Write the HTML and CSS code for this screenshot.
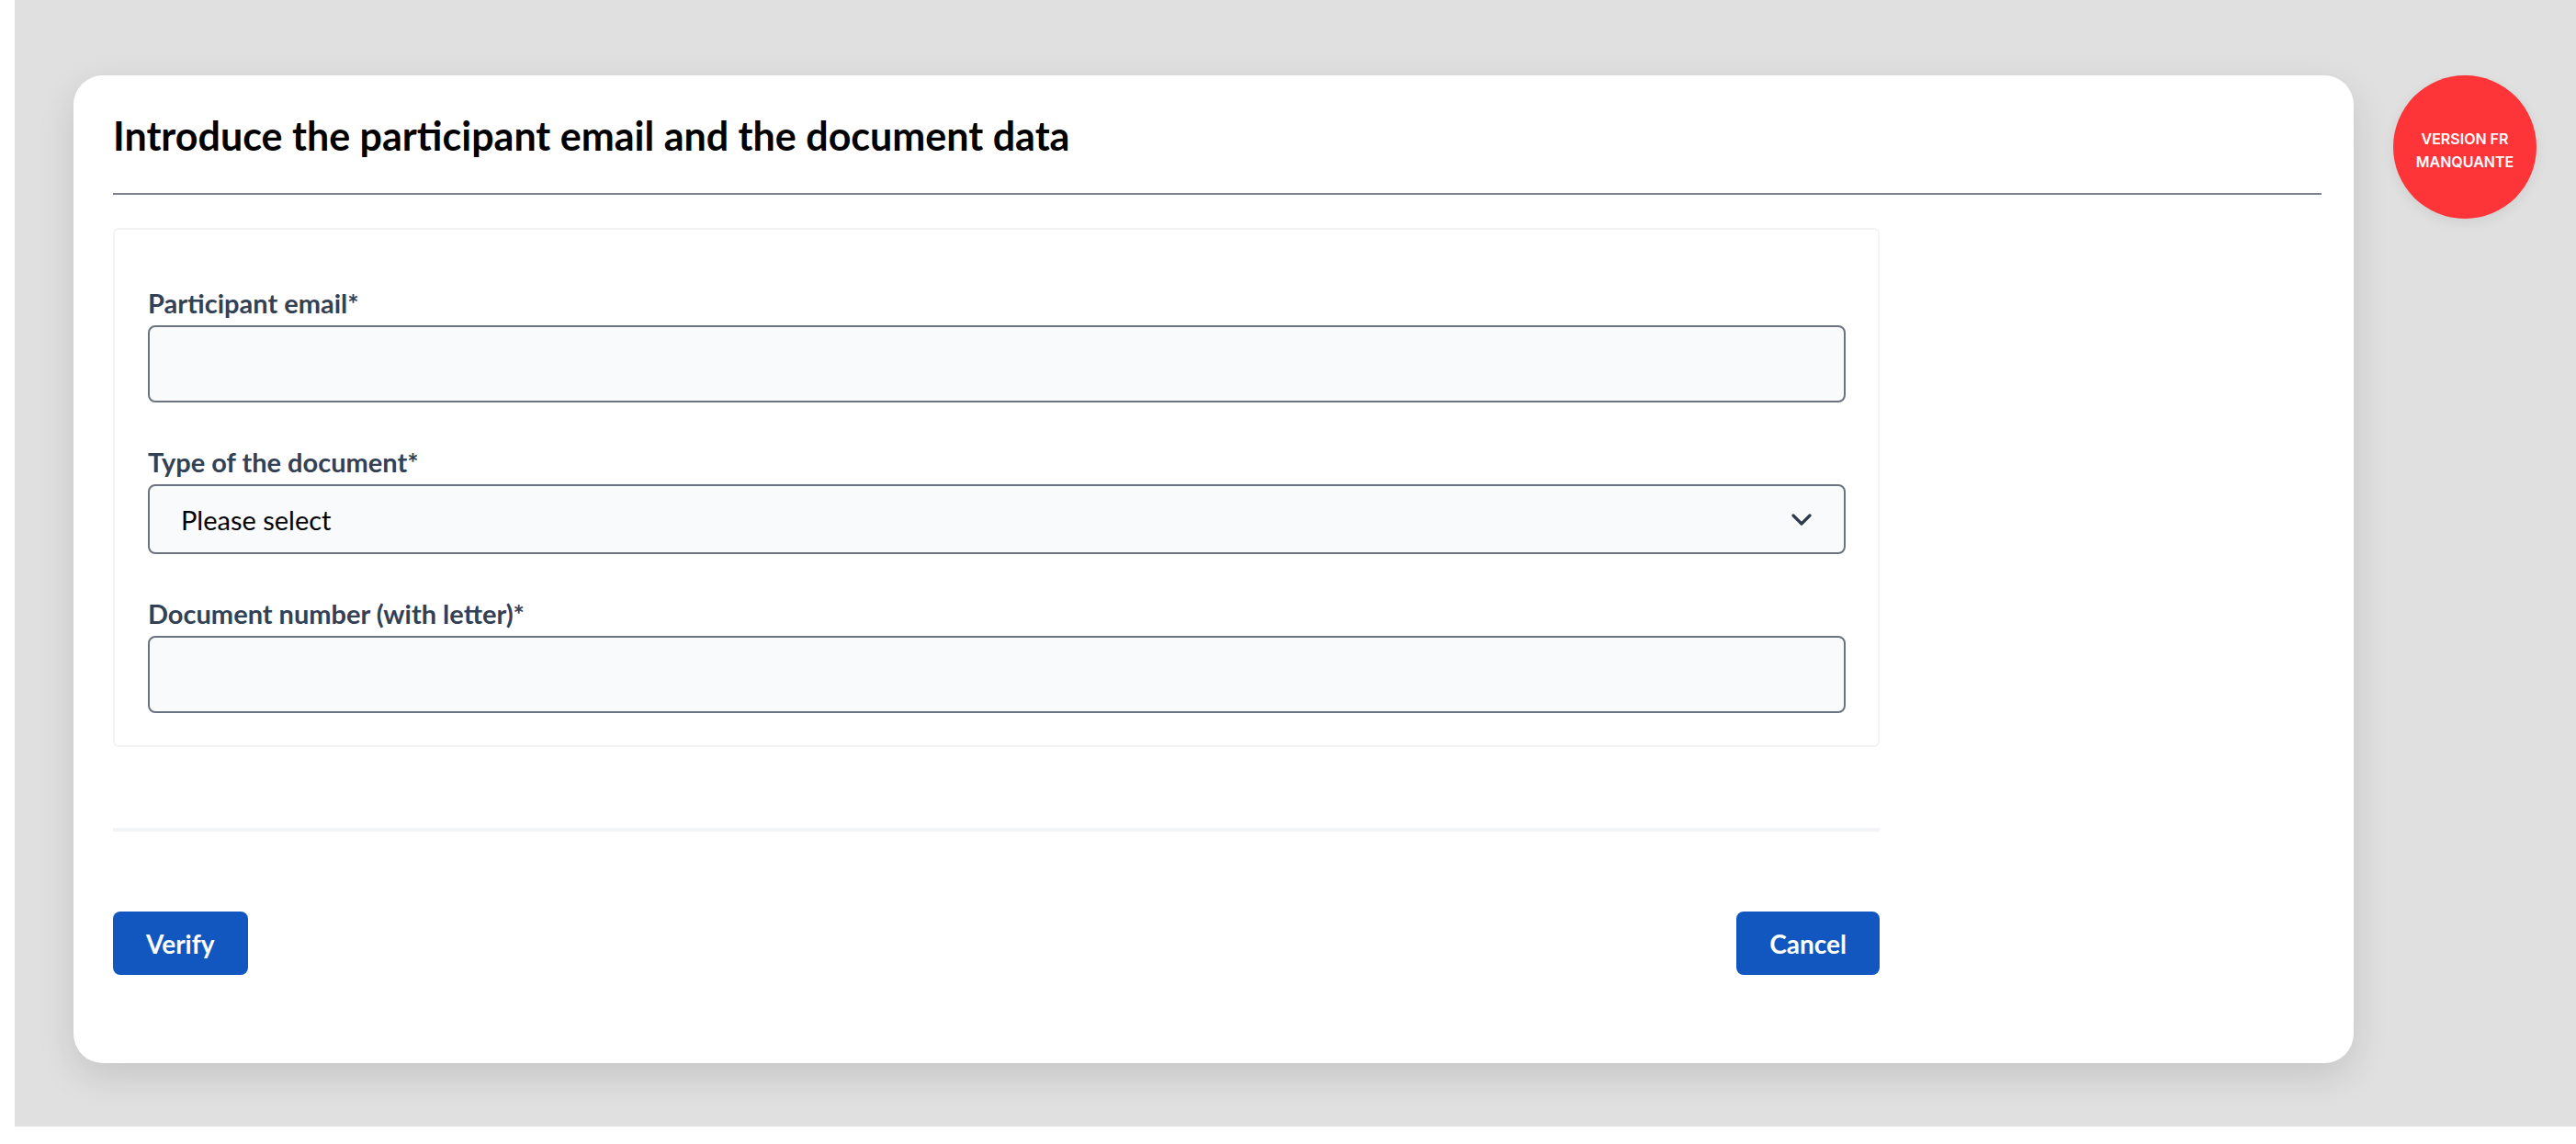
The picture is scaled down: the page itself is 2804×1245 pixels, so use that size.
FILE: index.html
```html
<!DOCTYPE html>
<html lang="en">
<head>
    <meta charset="UTF-8">
    <title>Participant verification</title>
    <link rel="stylesheet" href="styles.css">
</head>
<body>

<div class="page">
    <div class="card">
        <div class="card-header">
            <h1>Introduce the participant email and the document data</h1>
        </div>

        <div class="card-body">
            <form class="form-box">
                <div class="field">
                    <label for="email">Participant email*</label>
                    <input type="email" id="email" class="text-input">
                </div>
                <div class="field">
                    <label for="doc-type">Type of the document*</label>
                    <div class="select-wrap">
                        <select id="doc-type" class="select-input">
                            <option>Please select</option>
                            <option>DNI</option>
                            <option>NIE</option>
                            <option>Passport</option>
                        </select>
                        <svg class="chevron" width="22" height="13" viewBox="0 0 22 13">
                            <path d="M2 2 L11 11 L20 2" fill="none" stroke="#2d3b4d" stroke-width="3.2" stroke-linecap="round" stroke-linejoin="round"/>
                        </svg>
                    </div>
                </div>
                <div class="field">
                    <label for="doc-number">Document number (with letter)*</label>
                    <input type="text" id="doc-number" class="text-input">
                </div>
            </form>

            <hr class="separator">

            <div class="actions">
                <button type="button" class="btn">Verify</button>
                <button type="button" class="btn">Cancel</button>
            </div>
        </div>
    </div>

    <div class="badge">
        <span>VERSION FR<br>MANQUANTE</span>
    </div>
</div>

</body>
</html>
```

FILE: styles.css
```css
* {
    box-sizing: border-box;
}
body {
    margin: 0;
    background: #fff;
    font-family: 'Lato', sans-serif;
}
.page {
    margin-left: 16px;
    height: 1226px;
    background-color: #e0e0e0;
    padding: 82px 0 0 64px;
    display: flex;
    align-items: flex-start;
    gap: 43px;
}
.card {
    width: 2482px;
    background: #fff;
    border-radius: 32px;
    padding: 40px 35px 96px 43px;
    box-shadow: 0 14px 40px rgba(0,0,0,0.12);
}
.card-header {
    padding-bottom: 36px;
    border-bottom: 2px solid #7c808f;
}
h1 {
    margin: 0;
    font-size: 43px;
    line-height: 52px;
    font-weight: 700;
    color: #000;
}
.card-body {
    width: 1923px;
    padding-top: 36px;
}
.form-box {
    margin: 0;
    border: 2px solid #f2f3f5;
    border-radius: 6px;
    padding: 62px 35px 35px 36px;
}
.field {
    margin-bottom: 47px;
}
.field:last-child {
    margin-bottom: 0;
}
label {
    display: block;
    font-size: 29px;
    line-height: 36px;
    font-weight: 700;
    color: #334155;
    margin-bottom: 6px;
}
.text-input, .select-input {
    display: block;
    width: 100%;
    border: 2px solid #6b7280;
    border-radius: 8px;
    background: #f9fafb;
    font-family: 'Lato', sans-serif;
    font-size: 29px;
    color: #000;
}
.text-input {
    height: 84px;
    padding: 0 34px;
}
.select-wrap {
    position: relative;
}
.select-input {
    height: 76px;
    padding: 0 80px 0 34px;
    appearance: none;
    -webkit-appearance: none;
}
.chevron {
    position: absolute;
    right: 37px;
    top: 32px;
    pointer-events: none;
}
.separator {
    margin: 88px 0 0;
    border: 0;
    height: 4px;
    background: #f3f4f7;
}
.actions {
    display: flex;
    justify-content: space-between;
    margin-top: 87px;
}
.btn {
    height: 69px;
    padding: 0 36px;
    border: 0;
    border-radius: 8px;
    background: #1257c0;
    color: #fff;
    font-family: 'Lato', sans-serif;
    font-size: 28px;
    font-weight: 700;
}
.badge {
    width: 156px;
    height: 156px;
    flex-shrink: 0;
    border-radius: 50%;
    background: #fe3538;
    box-shadow: 0 4px 14px rgba(0,0,0,0.08);
    display: flex;
    align-items: center;
    justify-content: center;
    padding-top: 7px;
    text-align: center;
    color: #fff;
    font-family: 'Inter', sans-serif;
    font-size: 16px;
    line-height: 25px;
    font-weight: 600;
}
```
